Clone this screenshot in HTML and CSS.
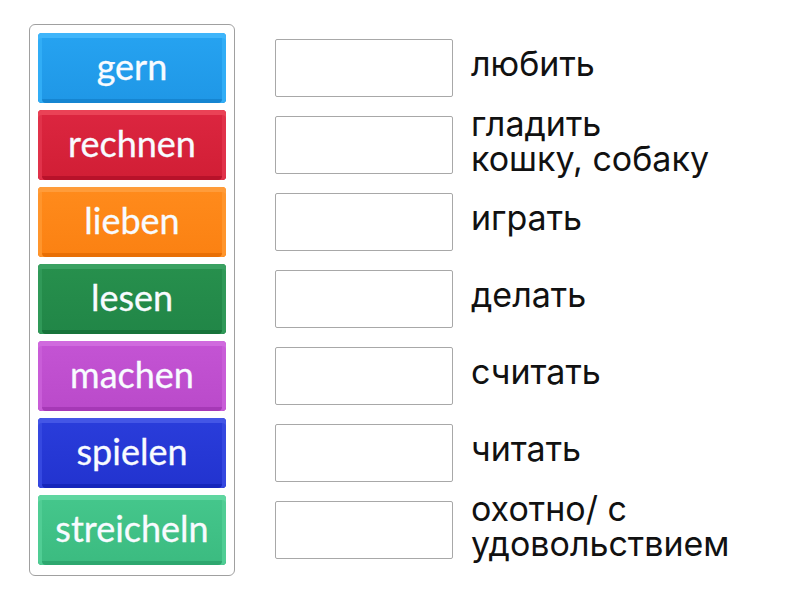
FILE: index.html
```html
<!DOCTYPE html>
<html>
<head>
<meta charset="utf-8">
<link rel="stylesheet" href="styles.css">
</head>
<body>
<div class="page">
  <div class="tiles">
    <div class="tile c1">gern</div>
    <div class="tile c2">rechnen</div>
    <div class="tile c3">lieben</div>
    <div class="tile c4">lesen</div>
    <div class="tile c5">machen</div>
    <div class="tile c6">spielen</div>
    <div class="tile c7">streicheln</div>
  </div>
  <div class="targets">
    <div class="row"><div class="box"></div><div class="label">любить</div></div>
    <div class="row"><div class="box"></div><div class="label">гладить<br>кошку, собаку</div></div>
    <div class="row"><div class="box"></div><div class="label">играть</div></div>
    <div class="row"><div class="box"></div><div class="label">делать</div></div>
    <div class="row"><div class="box"></div><div class="label">считать</div></div>
    <div class="row"><div class="box"></div><div class="label">читать</div></div>
    <div class="row"><div class="box"></div><div class="label">охотно/ с<br>удовольствием</div></div>
  </div>
</div>
</body>
</html>
```
FILE: styles.css
```css
html, body {
  margin: 0;
  padding: 0;
  background: #ffffff;
}
.page {
  display: flex;
  align-items: flex-start;
  padding: 24px 0 0 29px;
}
.tiles {
  width: 188px;
  border: 1px solid #a0a0a0;
  border-radius: 6px;
  padding: 8px 8px 10px 8px;
  display: flex;
  flex-direction: column;
  gap: 7px;
}
.tile {
  height: 70px;
  border-radius: 4px;
  display: flex;
  align-items: center;
  justify-content: center;
  color: #f8fbff;
  font-family: "Lato", "Open Sans", sans-serif;
  font-size: 36px;
  line-height: 1;
  padding-bottom: 4px;
  box-sizing: border-box;
  -webkit-text-stroke: 0.3px #f8fbff;
}
.c1 { background: linear-gradient(#26a3f1, #1f97e6); box-shadow: inset 0 5px 0 #3fb5fa, inset 4px 0 0 #31adf6, inset -4px 0 0 #31adf6, inset 0 -4px 0 #1585d1; }
.c2 { background: linear-gradient(#dc2640, #d11e35); box-shadow: inset 0 5px 0 #ea4256, inset 4px 0 0 #e1324a, inset -4px 0 0 #e1324a, inset 0 -4px 0 #b8122a; }
.c3 { background: linear-gradient(#ff8b1c, #fb8112); box-shadow: inset 0 5px 0 #ff9c3a, inset 4px 0 0 #ff952c, inset -4px 0 0 #ff952c, inset 0 -4px 0 #e86f05; }
.c4 { background: linear-gradient(#27904d, #218647); box-shadow: inset 0 5px 0 #3aa162, inset 4px 0 0 #309958, inset -4px 0 0 #309958, inset 0 -4px 0 #17733a; }
.c5 { background: linear-gradient(#c454d4, #ba4aca); box-shadow: inset 0 5px 0 #d06ade, inset 4px 0 0 #c95dd8, inset -4px 0 0 #c95dd8, inset 0 -4px 0 #a639b6; }
.c6 { background: linear-gradient(#2a3ddb, #2233cf); box-shadow: inset 0 5px 0 #4456e6, inset 4px 0 0 #3548e0, inset -4px 0 0 #3548e0, inset 0 -4px 0 #1626bb; }
.c7 { background: linear-gradient(#45c78c, #3bbb80); box-shadow: inset 0 5px 0 #5fd6a0, inset 4px 0 0 #50cd94, inset -4px 0 0 #50cd94, inset 0 -4px 0 #2ea76f; }
.targets {
  display: flex;
  flex-direction: column;
  gap: 7px;
  margin-left: 40px;
  padding-top: 9px;
}
.row {
  height: 70px;
  display: flex;
  align-items: center;
}
.box {
  width: 176px;
  height: 56px;
  border: 1px solid #a8a8a8;
  border-radius: 2px;
  flex: none;
}
.label {
  margin-left: 18px;
  font-family: "Inter", "Roboto", sans-serif;
  font-size: 34px;
  line-height: 35px;
  color: #111111;
  padding-bottom: 9px;
}
```
